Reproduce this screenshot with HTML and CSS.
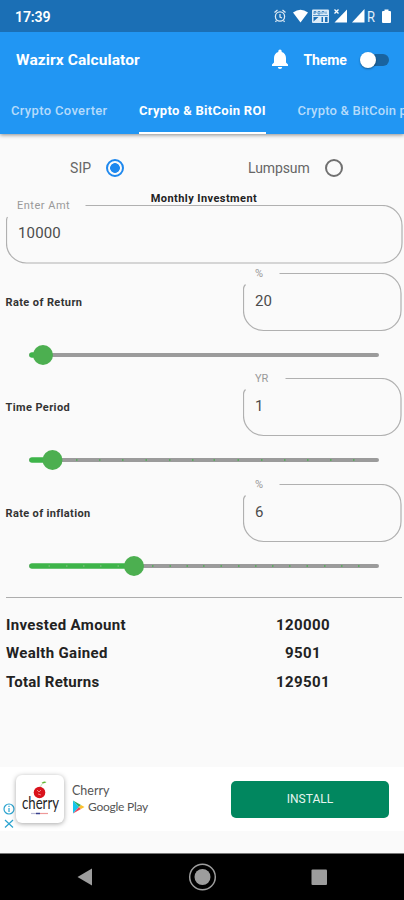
FILE: index.html
```html
<!DOCTYPE html>
<html lang="en">
<head>
<meta charset="utf-8">
<title>Wazirx Calculator</title>
<link rel="stylesheet" href="styles.css">
</head>
<body>
<div class="screen">
  <div class="status">
    <span class="clock">17:39</span>
    <svg class="status-icons" width="130" height="32" viewBox="274 0 130 32">
      <g fill="none" stroke="#fff" stroke-opacity=".85" stroke-width="1.3">
        <circle cx="280" cy="16.500" r="4.600"/>
        <path d="M280 14v3l2 1M274.500 12.500l3-2.500M285.500 12.500l-3-2.500M276.500 20.500l-1 1.500M283.500 20.500l1 1.500"/>
      </g>
      <path fill="#fff" d="M293 12.500q7.500-5.500 15 0L300.500 22.500z"/>
      <rect x="312" y="9.500" width="17" height="13.500" rx="1" fill="#dcebf8"/>
      <path fill="none" stroke="#1b6fb5" stroke-width=".7" d="M314 14v-2.500h2v1.500h-2M318 11.500v2.500h2v-2.500zM322 14v-2.500h2v2M326 11.500v2.500M313 15.500h15"/>
      <path fill="#1b6fb5" d="M313.500 21.500v-4.500h5zM321.500 17h1.500v5h-1.500zM325 17h2.500v5H325z"/>
      <path fill="#fff" d="M347 9.500v13H334.500z"/>
      <path stroke="#fff" stroke-width="1.300" d="M334.500 9.500l4 4M338.500 9.500l-4 4"/>
      <path fill="#fff" d="M364.500 9v13.500H352z"/>
      <text class="roaming" x="367" y="21.500" textLength="8" lengthAdjust="spacingAndGlyphs">R</text>
      <path fill="#fff" d="M384.500 9.500h4v1.500h1.500q1 0 1 1v10q0 1-1 1h-7q-1 0-1-1V12q0-1 1-1h1.500z"/>
    </svg>
  </div>

  <header class="appbar">
    <div class="toolbar">
      <h1 class="title">Wazirx Calculator</h1>
      <svg class="bell" width="18" height="21" viewBox="0 0 18 21">
        <path fill="#fff" d="M9 20a2.200 2.200 0 0 0 2.200-2H6.800A2.200 2.200 0 0 0 9 20zM15 13.500V9c0-3-1.600-5.300-4.300-6V2.200a1.700 1.700 0 0 0-3.400 0V3C4.600 3.700 3 6 3 9v4.500L1 15.600V17h16v-1.400z"/>
      </svg>
      <span class="theme">Theme</span>
      <span class="switch"><span class="knob"></span></span>
    </div>
    <nav class="tabs">
      <span class="tab tab-first">Crypto Coverter</span>
      <span class="tab tab-on">Crypto &amp; BitCoin ROI</span>
      <span class="tab tab-last">Crypto &amp; BitCoin p</span>
    </nav>
  </header>

  <main class="content">
    <div class="modes">
      <div class="mode mode-sip"><span>SIP</span><span class="radio radio-on"></span></div>
      <div class="mode mode-lump"><span>Lumpsum</span><span class="radio"></span></div>
    </div>
    <div class="caption">Monthly Investment</div>
    <div class="field field-wide">
      <svg class="outline" width="397" height="59" viewBox="0 0 397 59"><path d="M79.500 .5H376a20 20 0 0 1 20 20v17.500a20 20 0 0 1-20 20H20.500a20 20 0 0 1-20-20V16q0-2.500 1-4"/></svg>
      <span class="hint hint-amt">Enter Amt</span>
      <span class="value">10000</span>
    </div>

    <section class="param">
      <div class="param-row">
        <span class="name name-return">Rate of Return</span>
        <div class="field">
          <svg class="outline" width="159" height="59" viewBox="0 0 159 59"><path d="M36.500 .5H138a20 20 0 0 1 20 20v17a20 20 0 0 1-20 20H20.500a20 20 0 0 1-20-20V16q0-2.500 2-4.500"/></svg>
          <span class="hint">%</span>
          <span class="value">20</span>
        </div>
      </div>
      <svg class="slider" width="404" height="47" viewBox="0 0 404 47">
        <path class="rail" d="M31 24H377"/><path class="fill" d="M32 24H43"/>
        <circle cx="43" cy="24" r="10"/>
      </svg>
    </section>

    <section class="param">
      <div class="param-row">
        <span class="name name-period">Time Period</span>
        <div class="field">
          <svg class="outline" width="159" height="59" viewBox="0 0 159 59"><path d="M42.500 .5H138a20 20 0 0 1 20 20v17a20 20 0 0 1-20 20H20.500a20 20 0 0 1-20-20V16q0-2.500 2-4.500"/></svg>
          <span class="hint">YR</span>
          <span class="value">1</span>
        </div>
      </div>
      <svg class="slider" width="404" height="47" viewBox="0 0 404 47">
        <path class="rail" d="M31 24H377"/><path class="fill" d="M32 24H53"/>
        <path class="ticks" d="M76 24h1.500M99 24h1.500M122 24h1.500M145.500 24h1.500M169 24h1.500M192 24h1.500M213.500 24h1.500M237.500 24h1.500M261 24h1.500M284 24h1.500M307 24h1.500M330 24h1.500M353 24h1.500"/>
        <circle cx="52.500" cy="24" r="10"/>
      </svg>
    </section>

    <section class="param">
      <div class="param-row">
        <span class="name name-inflation">Rate of inflation</span>
        <div class="field">
          <svg class="outline" width="159" height="59" viewBox="0 0 159 59"><path d="M36.500 .5H138a20 20 0 0 1 20 20v17a20 20 0 0 1-20 20H20.500a20 20 0 0 1-20-20V16q0-2.500 2-4.500"/></svg>
          <span class="hint">%</span>
          <span class="value">6</span>
        </div>
      </div>
      <svg class="slider" width="404" height="47" viewBox="0 0 404 47">
        <path class="rail" d="M31 24H377"/><path class="fill" d="M32 24H134"/>
        <path class="ticks ticks-soft" d="M48.500 24h1.500M66 24h1.500M83 24h1.500M100 24h1.500M117.500 24h1.500"/>
        <path class="ticks" d="M152 24h1.500M169.500 24h1.500M186.500 24h1.500M203 24h1.500M220.500 24h1.500M238 24h1.500M255 24h1.500M272 24h1.500M289 24h1.500M306.500 24h1.500M324 24h1.500M341 24h1.500M358 24h1.500"/>
        <circle cx="134" cy="24" r="10"/>
      </svg>
    </section>

    <div class="results">
      <div class="result"><span class="r-inv">Invested Amount</span><span class="sum">120000</span></div>
      <div class="result"><span class="r-wealth">Wealth Gained</span><span class="sum">9501</span></div>
      <div class="result"><span class="r-total">Total Returns</span><span class="sum">129501</span></div>
    </div>
  </main>

  <aside class="ad">
    <svg class="ad-marks" width="12" height="28" viewBox="0 0 12 28" fill="none" stroke="#2ba3cf" stroke-width="1.200">
      <circle cx="6" cy="7" r="5"/><path d="M6 6v4M6 3.800v1.200M2 18l8 7.500M10 18l-8 7.500"/>
    </svg>
    <div class="logo">
      <svg width="48" height="48" viewBox="0 0 48 48">
        <path d="M24 13q1-4 4-5.500" fill="none" stroke="#b5cf9a" stroke-width=".8"/>
        <path d="M25.500 8q2-2.500 5-1-2 2-5 1z" fill="#62b832"/>
        <circle cx="23.500" cy="17.500" r="5.800" fill="#d9131d"/>
        <path d="M21 15l2 2 2-2M22 19l3 1" fill="none" stroke="#f6a0a0" stroke-width=".8"/>
        <text class="logo-text" x="6" y="34" textLength="37" lengthAdjust="spacingAndGlyphs">cherry</text>
        <path d="M15 38.500h5" stroke="#b9b9d5" stroke-width="1.200"/><path d="M20 38.500h4" stroke="#39408d" stroke-width="1.500"/><path d="M24 38.500h8" stroke="#e99" stroke-width="1.200"/>
      </svg>
    </div>
    <div class="ad-text">
      <span class="ad-name">Cherry</span>
      <span class="store">
        <svg width="13" height="14" viewBox="0 0 13 14"><path fill="#16c5ec" d="M1 .5v13L7 7z"/><path fill="#28ad64" d="M1 .5L9 5 7 7z"/><path fill="#ef4056" d="M1 13.500L9 9 7 7z"/><path fill="#fbc02d" d="M9 5l3.500 2L9 9 7 7z"/></svg>
        <span class="store-name">Google Play</span>
      </span>
    </div>
    <div class="install"><span>INSTALL</span></div>
  </aside>

  <footer class="navbar">
    <svg width="404" height="46" viewBox="0 0 404 46">
      <path fill="#9d9d9d" d="M77.500 23L92 14.500v17z"/>
      <circle cx="202.500" cy="23" r="12.800" fill="none" stroke="#9d9d9d" stroke-width="1.500"/>
      <circle cx="202.500" cy="23" r="8" fill="#9d9d9d"/>
      <rect x="311.500" y="15.500" width="15.500" height="15.500" rx="1" fill="#9d9d9d"/>
    </svg>
  </footer>
</div>
</body>
</html>
```
FILE: styles.css
```css
* { box-sizing: border-box; }
body { margin: 0; font-family: Roboto, "Liberation Sans", sans-serif; background: #fafafa; }
svg { display: block; flex: none; }
.screen { width: 404px; height: 900px; overflow: hidden; display: flex; flex-direction: column; background: #fafafa; }

.status { height: 32px; flex: none; display: flex; align-items: center; justify-content: space-between; padding-left: 15px; background: #1b6fb5; color: #fff; }
.clock { font-size: 14.2px; font-weight: 600; line-height: 32px; padding-top: 2px; letter-spacing: -.2px; }
.roaming { font-size: 14px; fill: #e4eff9; }

.appbar { height: 102px; flex: none; background: #2196f3; color: #fff; box-shadow: 0 1px 4px rgba(0,0,0,.45); clip-path: inset(0 0 -8px 0); }
.toolbar { height: 56px; display: flex; align-items: center; padding-left: 16px; }
.title { margin: 0; width: 255px; font-size: 15.5px; font-weight: 700; white-space: nowrap; letter-spacing: .1px; }
.bell { margin-top: -2px; }
.theme { width: 43px; margin-left: 14.5px; font-size: 14px; font-weight: 700; white-space: nowrap; letter-spacing: -.1px; }
.switch { width: 28px; height: 12px; margin-left: 14.5px; border-radius: 6px; background: #19639f; display: flex; align-items: center; }
.knob { width: 16px; height: 16px; flex: none; margin-left: -1px; border-radius: 50%; background: #fff; box-shadow: 0 1px 2px rgba(0,0,0,.4); }
.tabs { height: 46px; display: flex; white-space: nowrap; }
.tab { flex: none; line-height: 45px; height: 46px; font-size: 13px; font-weight: 500; color: #b5dbfb; }
.tab-first { width: 128px; margin-left: 11px; letter-spacing: .33px; }
.tab-on { width: 127px; color: #fff; border-bottom: 2px solid #fff; font-weight: 700; letter-spacing: .3px; }
.tab-last { margin-left: 31.5px; letter-spacing: .2px; }

.content { flex: none; height: 633px; display: flex; flex-direction: column; }
.modes { height: 57px; padding-top: 11px; display: flex; align-items: center; color: #666; font-size: 14px; }
.mode { display: flex; align-items: center; gap: 15px; }
.mode-sip { width: 178px; margin-left: 70px; letter-spacing: .1px; }
.mode-lump { letter-spacing: -.1px; }
.radio { width: 18px; height: 18px; border: 2px solid #707070; border-radius: 50%; }
.radio-on { border-color: #1e88ee; background: radial-gradient(circle, #1e88ee 4.5px, #fafafa 5.2px); }
.caption { height: 14px; line-height: 15px; padding-left: 4px; text-align: center; font-size: 11px; font-weight: 700; color: #222; letter-spacing: .43px; }
.field { position: relative; width: 159px; height: 58px; flex: none; display: flex; align-items: center; padding-left: 12px; }
.field-wide { width: 397px; margin-left: 6px; margin-bottom: 10px; }
.outline { position: absolute; left: 0; top: 0; fill: none; stroke: #b0b0b0; stroke-width: 1.2; }
.hint { position: absolute; left: 12px; top: -6px; font-size: 11px; line-height: 14px; color: #999; }
.hint-amt { left: 11px; letter-spacing: .5px; }
.value { font-size: 15px; line-height: 20px; color: #4c4c4c; margin-top: -2px; letter-spacing: .15px; }

.param { height: 105.4px; flex: none; }
.param-row { height: 58px; display: flex; align-items: center; padding-left: 5.5px; }
.name { width: 237.5px; font-size: 11px; font-weight: 700; color: #333; padding-top: 1px; }
.name-return { letter-spacing: .4px; }
.name-period { letter-spacing: .4px; }
.name-inflation { letter-spacing: .35px; }
.slider { fill: #4caf50; }
.rail { stroke: #9b9b9b; stroke-width: 4; stroke-linecap: round; }
.fill { stroke: #3eb449; stroke-width: 5.5; stroke-linecap: round; }
.ticks { stroke: #4caf50; stroke-width: 1.5; }
.ticks-soft { stroke: #78b978; }

.results { margin: 7.5px 2px 0 6px; border-top: 1px solid #adadad; padding-top: 12.9px; }
.result { height: 28.4px; display: flex; align-items: center; font-size: 15px; font-weight: 700; color: #222; }
.result > span:first-child { width: 198px; }
.result > .r-inv { letter-spacing: .35px; }
.result > .r-wealth { letter-spacing: .33px; }
.result > .r-total { letter-spacing: .25px; }
.sum { width: 198px; text-align: center; letter-spacing: .4px; }

.ad { height: 64px; flex: none; background: #fff; display: flex; align-items: center; }
.ad-marks { margin: 33px 0 0 3px; }
.logo { width: 48px; height: 48px; margin-left: 1px; border-radius: 6px; background: #fff; box-shadow: 0 1px 5px rgba(0,0,0,.35); }
.logo-text { font-family: Lato, sans-serif; font-size: 17px; fill: #252525; }
.ad-text { width: 159px; margin-left: 8px; display: flex; flex-direction: column; font-family: Lato, sans-serif; color: #555; white-space: nowrap; }
.ad-name { font-size: 12.5px; line-height: 16px; letter-spacing: 0; }
.store { display: flex; align-items: center; gap: 3px; font-size: 12px; line-height: 16px; letter-spacing: -.25px; }
.install { width: 158px; height: 37px; border-radius: 5px; background: #01875f; color: #e5f5ef; display: flex; align-items: center; justify-content: center; font-size: 12px; }

.navbar { height: 47px; flex: none; margin-top: 22px; border-top: 1px solid #777; background: #000; }
```
